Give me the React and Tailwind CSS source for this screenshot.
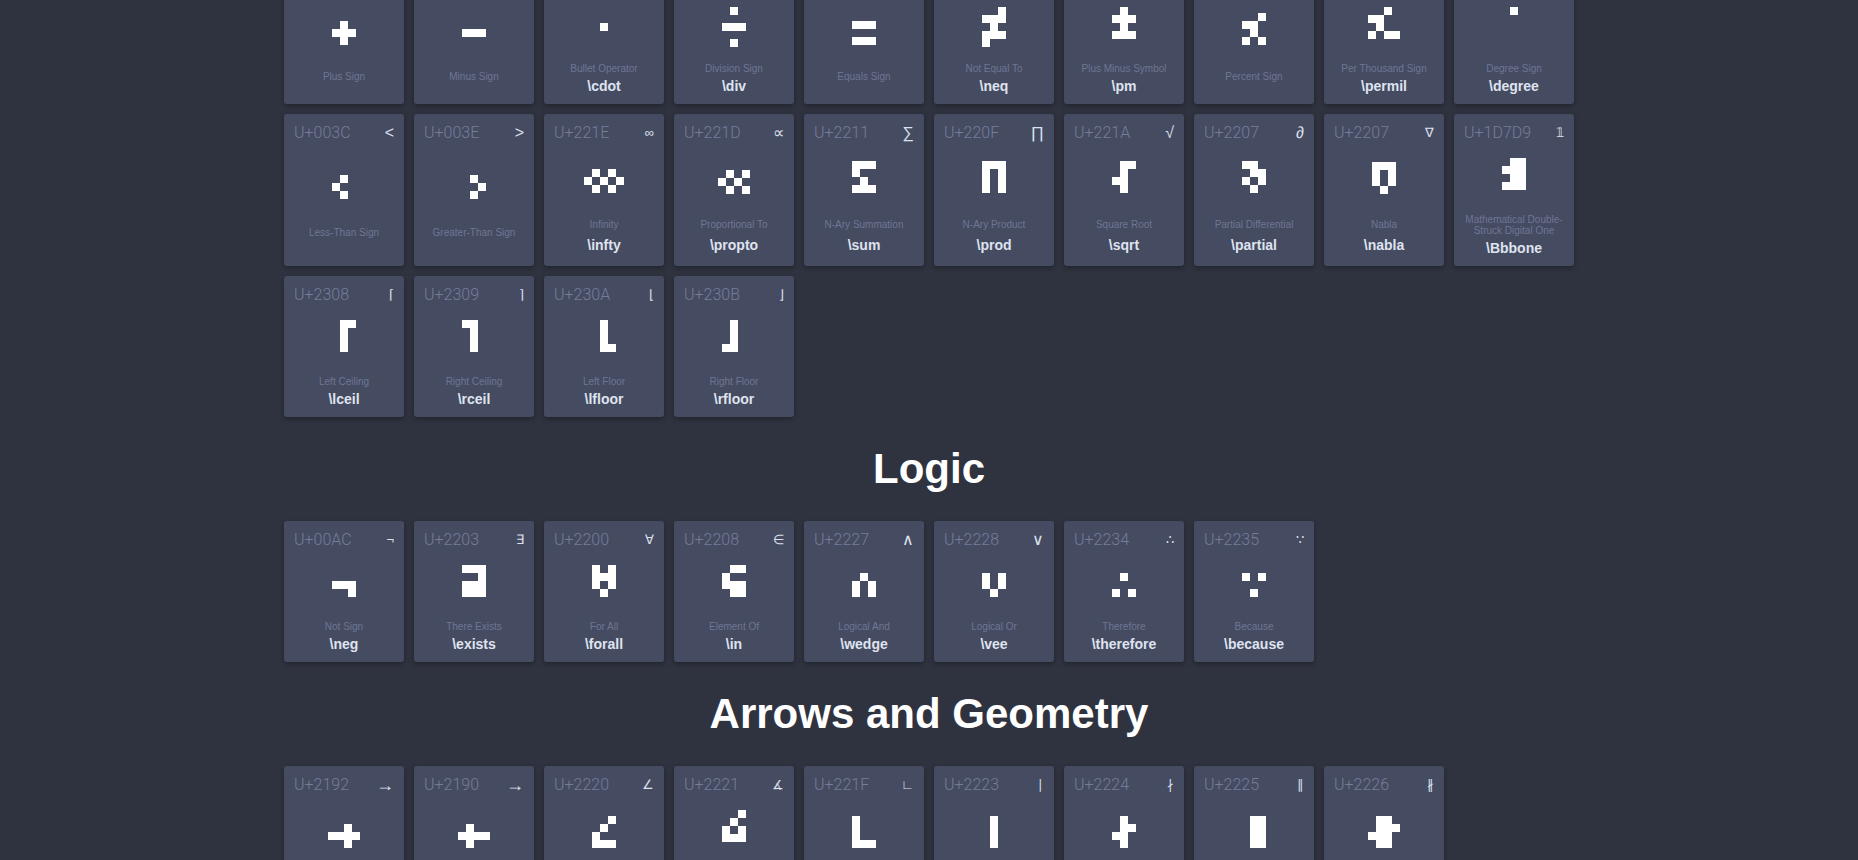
const sans = 'font-["Liberation_Sans",Arial,sans-serif]';
const code = 'font-["Roboto",Arial,sans-serif]';

const bigSyms = '<>∑∏√∂∝∧∨';

const symSize = sym => {
  if (sym === '→') return 'text-[18px]';
  return bigSyms.includes(sym) ? 'text-[16px]' : 'text-[13px]';
};

// bitmap glyph: rows of # at 8px cells, x = offset from card left, y = offset from the glyph box top
const Glyph = ({ rows, x, y = 0 }) => (
  <svg width="120" height="48" className="block overflow-visible -mx-[10px] mb-[-8px]" shapeRendering="crispEdges">
    {rows.map((row, r) =>
      row.split('').map((c, i) =>
        c === '#' ? <rect key={r + '-' + i} x={x + i * 8} y={y + r * 8} width="8" height="8" fill="#ffffff" /> : null
      )
    )}
  </svg>
);

const Card = ({ unicode, sym, name, latex, rows, x, y, tall }) => {
  const twoLine = name.length > 25;
  const glyphMargin = twoLine ? 'mt-[16px]' : latex ? (tall ? 'mt-[19px]' : 'mt-[16px]') : tall ? 'mt-[25px]' : 'mt-[22px]';
  const nameMargin = twoLine ? 'mt-[16px]' : latex ? (tall ? 'mt-[18px]' : 'mt-[16px]') : tall ? 'mt-[20px]' : 'mt-[18px]';
  const latexMargin = twoLine ? 'mt-[4px]' : tall ? 'mt-[7px]' : 'mt-[4px]';
  return (
    <div className="w-[120px] rounded-[3px] bg-[#454b61] px-[10px] pb-[10px] shadow-[0_2px_5px_rgba(0,0,0,0.3)]">
      <div className="flex h-[28px] items-center justify-between pt-[10px]">
        <span className={code + ' text-[16px] leading-[18px] font-light text-[#767d9b]'}>{unicode}</span>
        <span className={symSize(sym) + ' leading-[18px] text-[#dde1ee]'}>{sym}</span>
      </div>
      <div className={glyphMargin}>
        <Glyph rows={rows} x={x} y={y} />
      </div>
      <div className={nameMargin + ' text-center text-[10px] leading-[11px] text-[#6f7694]'}>{name}</div>
      {latex && (
        <div className={latexMargin + ' text-center text-[14px] leading-[16px] font-bold text-[#dfe3ef]'}>{latex}</div>
      )}
    </div>
  );
};

const Row = ({ items, tall }) => (
  <div className="grid grid-cols-[repeat(10,120px)] gap-[10px]">
    {items.map(item => (
      <Card key={item.name} {...item} tall={tall} />
    ))}
  </div>
);

const Heading = ({ children }) => (
  <h2 className="py-[28px] text-center text-[42px] leading-[48px] font-bold text-white">{children}</h2>
);

const rowOne = [
  { unicode: 'U+002B', sym: '+', name: 'Plus Sign', x: 48, y: 8, rows: ['.#.', '###', '.#.'] },
  { unicode: 'U+2212', sym: '−', name: 'Minus Sign', x: 48, y: 16, rows: ['###'] },
  { unicode: 'U+22C5', sym: '⋅', name: 'Bullet Operator', latex: '\\cdot', x: 56, y: 16, rows: ['#'] },
  { unicode: 'U+00F7', sym: '÷', name: 'Division Sign', latex: '\\div', x: 48, rows: ['.#.', '...', '###', '...', '.#.'] },
  { unicode: 'U+003D', sym: '=', name: 'Equals Sign', x: 48, y: 8, rows: ['###', '...', '###'] },
  { unicode: 'U+2260', sym: '≠', name: 'Not Equal To', latex: '\\neq', x: 48, rows: ['..#', '###', '.#.', '###', '#..'] },
  { unicode: 'U+00B1', sym: '±', name: 'Plus Minus Symbol', latex: '\\pm', x: 48, rows: ['.#.', '###', '.#.', '###'] },
  { unicode: 'U+0025', sym: '%', name: 'Percent Sign', x: 48, rows: ['..#', '##.', '.#.', '#.#'] },
  { unicode: 'U+2030', sym: '‰', name: 'Per Thousand Sign', latex: '\\permil', x: 44, rows: ['..#.', '##..', '.#..', '#.##'] },
  { unicode: 'U+00B0', sym: '°', name: 'Degree Sign', latex: '\\degree', x: 56, rows: ['#'] }
];

const rowTwo = [
  { unicode: 'U+003C', sym: '<', name: 'Less-Than Sign', x: 48, y: 8, rows: ['.#', '#.', '.#'] },
  { unicode: 'U+003E', sym: '>', name: 'Greater-Than Sign', x: 56, y: 8, rows: ['#.', '.#', '#.'] },
  { unicode: 'U+221E', sym: '∞', name: 'Infinity', latex: '\\infty', x: 40, y: 8, rows: ['.#.#.', '#.#.#', '.#.#.'] },
  { unicode: 'U+221D', sym: '∝', name: 'Proportional To', latex: '\\propto', x: 44, y: 9, rows: ['.#.#', '#.#.', '.#.#'] },
  { unicode: 'U+2211', sym: '∑', name: 'N-Ary Summation', latex: '\\sum', x: 48, rows: ['###', '#..', '.#.', '###'] },
  { unicode: 'U+220F', sym: '∏', name: 'N-Ary Product', latex: '\\prod', x: 48, rows: ['###', '#.#', '#.#', '#.#'] },
  { unicode: 'U+221A', sym: '√', name: 'Square Root', latex: '\\sqrt', x: 48, rows: ['.##', '.#.', '##.', '.#.'] },
  { unicode: 'U+2207', sym: '∂', name: 'Partial Differential', latex: '\\partial', x: 48, rows: ['##.', '.##', '#.#', '.#.'] },
  { unicode: 'U+2207', sym: '∇', name: 'Nabla', latex: '\\nabla', x: 48, y: 1, rows: ['###', '#.#', '#.#', '.#.'] },
  { unicode: 'U+1D7D9', sym: '𝟙', name: 'Mathematical Double-Struck Digital One', latex: '\\Bbbone', x: 48, rows: ['.##', '###', '.##', '###'] }
];

const rowThree = [
  { unicode: 'U+2308', sym: '⌈', name: 'Left Ceiling', latex: '\\lceil', x: 56, rows: ['##', '#.', '#.', '#.'] },
  { unicode: 'U+2309', sym: '⌉', name: 'Right Ceiling', latex: '\\rceil', x: 48, rows: ['##', '.#', '.#', '.#'] },
  { unicode: 'U+230A', sym: '⌊', name: 'Left Floor', latex: '\\lfloor', x: 56, rows: ['#.', '#.', '#.', '##'] },
  { unicode: 'U+230B', sym: '⌋', name: 'Right Floor', latex: '\\rfloor', x: 48, rows: ['.#', '.#', '.#', '##'] }
];

const logic = [
  { unicode: 'U+00AC', sym: '¬', name: 'Not Sign', latex: '\\neg', x: 48, y: 16, rows: ['###', '..#'] },
  { unicode: 'U+2203', sym: '∃', name: 'There Exists', latex: '\\exists', x: 48, rows: ['###', '..#', '###', '###'] },
  { unicode: 'U+2200', sym: '∀', name: 'For All', latex: '\\forall', x: 48, rows: ['#.#', '###', '#.#', '.#.'] },
  { unicode: 'U+2208', sym: '∈', name: 'Element Of', latex: '\\in', x: 48, rows: ['.##', '#..', '###', '.##'] },
  { unicode: 'U+2227', sym: '∧', name: 'Logical And', latex: '\\wedge', x: 48, y: 8, rows: ['.#.', '#.#', '#.#'] },
  { unicode: 'U+2228', sym: '∨', name: 'Logical Or', latex: '\\vee', x: 48, y: 8, rows: ['#.#', '#.#', '.#.'] },
  { unicode: 'U+2234', sym: '∴', name: 'Therefore', latex: '\\therefore', x: 48, y: 8, rows: ['.#.', '...', '#.#'] },
  { unicode: 'U+2235', sym: '∵', name: 'Because', latex: '\\because', x: 48, y: 8, rows: ['#.#', '...', '.#.'] }
];

const arrows = [
  { unicode: 'U+2192', sym: '→', name: 'Rightwards Arrow', x: 44, y: 8, rows: ['..#.', '####', '..#.'] },
  { unicode: 'U+2190', sym: '→', name: 'Leftwards Arrow', x: 44, y: 8, rows: ['.#..', '####', '.#..'] },
  { unicode: 'U+2220', sym: '∠', name: 'Angle', x: 48, rows: ['..#', '.#.', '#..', '###'] },
  { unicode: 'U+2221', sym: '∡', name: 'Measured Angle', latex: '\\measuredangle', x: 48, rows: ['..#', '.#.', '#.#', '###'] },
  { unicode: 'U+221F', sym: '∟', name: 'Right Angle', x: 48, rows: ['#..', '#..', '#..', '###'] },
  { unicode: 'U+2223', sym: '∣', name: 'Divides', x: 56, rows: ['#', '#', '#', '#'] },
  { unicode: 'U+2224', sym: '∤', name: 'Does Not Divide', x: 48, rows: ['.#.', '.##', '##.', '.#.'] },
  { unicode: 'U+2225', sym: '∥', name: 'Parallel To', x: 56, rows: ['##', '##', '##', '##'] },
  { unicode: 'U+2226', sym: '∦', name: 'Not Parallel To', x: 44, rows: ['.##.', '.###', '###.', '.##.'] }
];

export default function App() {
  return (
    <div className={'h-[860px] overflow-hidden bg-[#2f333f] ' + sans}>
      <div className="mx-auto -mt-[37px] flex w-[1290px] flex-col gap-[10px]">
        <Row items={rowOne} />
        <Row items={rowTwo} tall />
        <Row items={rowThree} />
      </div>
      <div className="mx-auto w-[1290px]">
        <Heading>Logic</Heading>
        <Row items={logic} />
        <Heading>Arrows and Geometry</Heading>
        <Row items={arrows} />
      </div>
    </div>
  );
}
